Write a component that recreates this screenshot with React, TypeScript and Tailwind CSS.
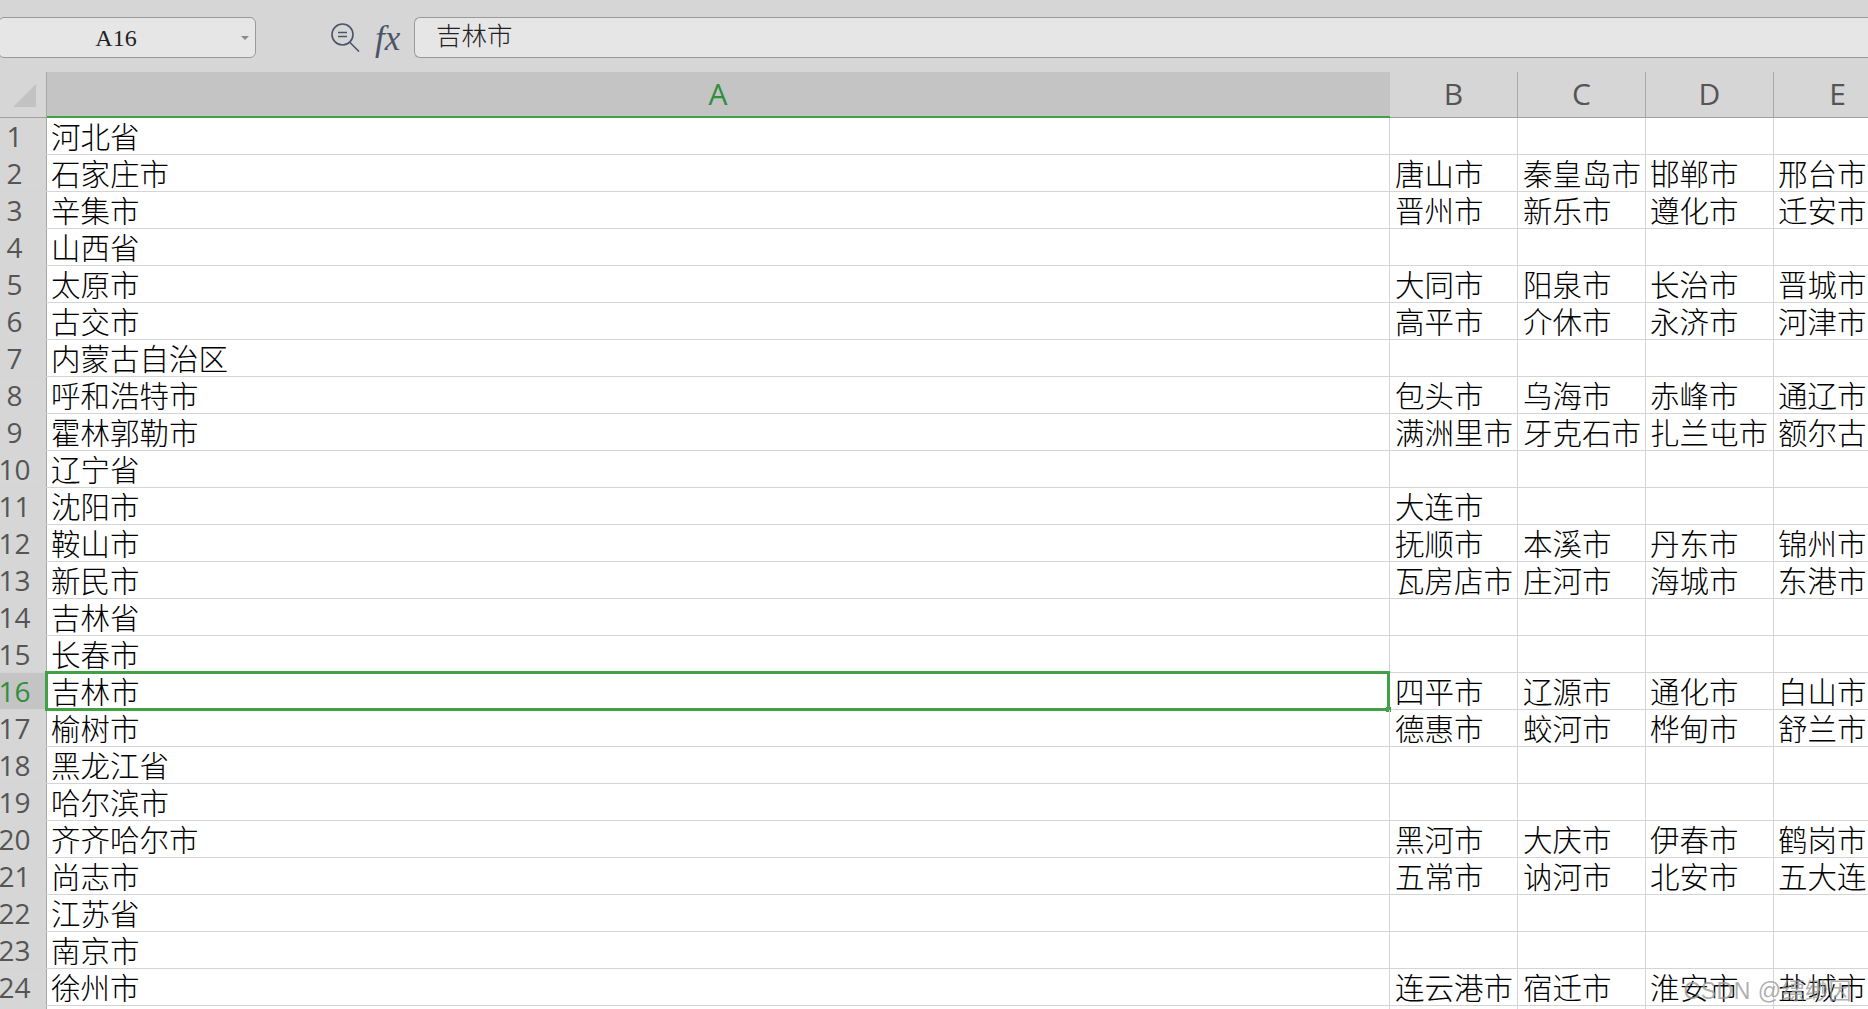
import React from 'react';

const ROWS: string[][] = [
  ['河北省'],
  ['石家庄市', '唐山市', '秦皇岛市', '邯郸市', '邢台市'],
  ['辛集市', '晋州市', '新乐市', '遵化市', '迁安市'],
  ['山西省'],
  ['太原市', '大同市', '阳泉市', '长治市', '晋城市'],
  ['古交市', '高平市', '介休市', '永济市', '河津市'],
  ['内蒙古自治区'],
  ['呼和浩特市', '包头市', '乌海市', '赤峰市', '通辽市'],
  ['霍林郭勒市', '满洲里市', '牙克石市', '扎兰屯市', '额尔古'],
  ['辽宁省'],
  ['沈阳市', '大连市'],
  ['鞍山市', '抚顺市', '本溪市', '丹东市', '锦州市'],
  ['新民市', '瓦房店市', '庄河市', '海城市', '东港市'],
  ['吉林省'],
  ['长春市'],
  ['吉林市', '四平市', '辽源市', '通化市', '白山市'],
  ['榆树市', '德惠市', '蛟河市', '桦甸市', '舒兰市'],
  ['黑龙江省'],
  ['哈尔滨市'],
  ['齐齐哈尔市', '黑河市', '大庆市', '伊春市', '鹤岗市'],
  ['尚志市', '五常市', '讷河市', '北安市', '五大连'],
  ['江苏省'],
  ['南京市'],
  ['徐州市', '连云港市', '宿迁市', '淮安市', '盐城市'],
  [],
];

const SELECTED = 16;
const cellFont = "font-['Noto_Sans_CJK_SC',sans-serif] font-light text-[29.5px] leading-none text-black";
const rowHeadFont = "font-['Open_Sans',sans-serif] text-[28px] leading-none";
const colHeadFont = "font-['Open_Sans',sans-serif] text-[30px] leading-none pb-[2px]";

const ZoomIcon = () => (
  <svg width="29" height="29" viewBox="0 0 29 29" fill="none" stroke="#4a5568" strokeWidth="1.6">
    <circle cx="11.5" cy="11.5" r="10.5" />
    <path d="M7 9.5h9M7 13.5h9M18.5 19l9.5 9.5" />
  </svg>
);

const Cell = ({ text, w, pad }: { text?: string; w: string; pad: string }) => (
  <div className={`${w} ${pad} shrink-0 h-full border-r border-[#d4d4d4] pt-[3px] whitespace-nowrap ${cellFont}`}>
    {text}
  </div>
);

const Row = ({ n, cells }: { n: number; cells: string[] }) => {
  const active = n === SELECTED;
  return (
    <div className="flex shrink-0 h-[37px] border-b border-[#d4d4d4]">
      <div className={`w-[47px] shrink-0 h-full border-r border-[#a8a8a8] flex items-center ${active ? 'bg-[#c4c4c4] text-[#2f8f3a]' : 'bg-[#d6d6d6] text-[#555555]'}`}>
        <span className={`w-[29px] flex justify-center ${rowHeadFont}`}>{n}</span>
      </div>
      <div className="relative flex h-full">
        <Cell w="w-[1343px]" pad="pl-[4px]" text={cells[0]} />
        {active && (
          <div className="absolute left-[-2px] top-[-2px] w-[1345px] h-[40px] border-[3px] border-[#42a047]">
            <div className="absolute right-[-4px] bottom-[-4px] w-[5px] h-[5px] bg-[#42a047]" />
          </div>
        )}
      </div>
      <Cell w="w-[128px]" pad="pl-[5px]" text={cells[1]} />
      <Cell w="w-[128px]" pad="pl-[5px]" text={cells[2]} />
      <Cell w="w-[128px]" pad="pl-[4px]" text={cells[3]} />
      <Cell w="w-[128px]" pad="pl-[4px]" text={cells[4]} />
    </div>
  );
};

const ColHead = ({ label, w, active }: { label: string; w: string; active?: boolean }) => (
  <div className={`${w} shrink-0 h-full flex items-center justify-center border-r ${colHeadFont} ${active ? 'bg-[#c4c4c4] text-[#2f8f3a] border-[#c4c4c4]' : 'bg-[#d6d6d6] text-[#555555] border-[#a8a8a8]'}`}>
    {label}
  </div>
);

const App: React.FC = () => {
  return (
    <div className="relative w-[1868px] h-[1009px] overflow-hidden bg-white flex flex-col">
      {/* Formula bar */}
      <div className="h-[72px] shrink-0 bg-[#d6d6d6] flex items-start pt-[17px]">
        <div className="relative w-[258px] h-[41px] shrink-0 ml-[-2px] bg-[#e6e6e6] border border-[#9a9a9a] rounded-[6px] flex items-center justify-center">
          <span className="font-['Liberation_Serif',serif] text-[24px] leading-none text-[#222222] mr-[22px]">A16</span>
          <span className="absolute right-[6px] top-[18px] w-0 h-0 border-x-[4px] border-x-transparent border-t-[4px] border-t-[#8a8a8a]" />
        </div>
        <div className="ml-[75px] mt-[6px] shrink-0 w-[29px]"><ZoomIcon /></div>
        <span className="ml-[15px] mt-[4px] w-[39px] shrink-0 font-['Liberation_Serif',serif] italic text-[35px] leading-none text-[#4a5568]">fx</span>
        <div className="flex-1 h-[41px] bg-[#e6e6e6] border border-[#9a9a9a] border-r-0 rounded-l-[6px] pl-[21px] flex items-start pt-[3px]">
          <span className="font-['Noto_Sans_CJK_SC',sans-serif] font-light text-[25.5px] leading-none text-[#222222]">吉林市</span>
        </div>
      </div>

      {/* Column headers */}
      <div className="h-[46px] shrink-0 flex border-b border-[#a0a0a0] bg-[#d6d6d6]">
        <div className="w-[47px] shrink-0 h-full flex items-end justify-end pb-[10px] pr-[10px] border-r border-[#a8a8a8]">
          <svg width="23" height="23" viewBox="0 0 23 23"><path d="M23 0V23H0Z" fill="#c2c2c2" /></svg>
        </div>
        <div className="relative h-full">
          <ColHead label="A" w="w-[1343px]" active />
          <div className="absolute left-0 right-0 bottom-[-1px] h-[2px] bg-[#42a047]" />
        </div>
        <ColHead label="B" w="w-[128px]" />
        <ColHead label="C" w="w-[128px]" />
        <ColHead label="D" w="w-[128px]" />
        <ColHead label="E" w="w-[128px]" />
      </div>

      {/* Grid */}
      <div className="flex-1 flex flex-col overflow-hidden">
        {ROWS.map((cells, i) => (
          <Row key={i} n={i + 1} cells={cells} />
        ))}
      </div>

      {/* Watermark */}
      <div className="absolute right-[16px] bottom-[6px] font-['Liberation_Sans','Noto_Sans_CJK_SC',sans-serif] text-[23px] leading-none tracking-[0.5px] text-[#9a9a9a]/80">
        CSDN @缥缈因
      </div>
    </div>
  );
};

export default App;
